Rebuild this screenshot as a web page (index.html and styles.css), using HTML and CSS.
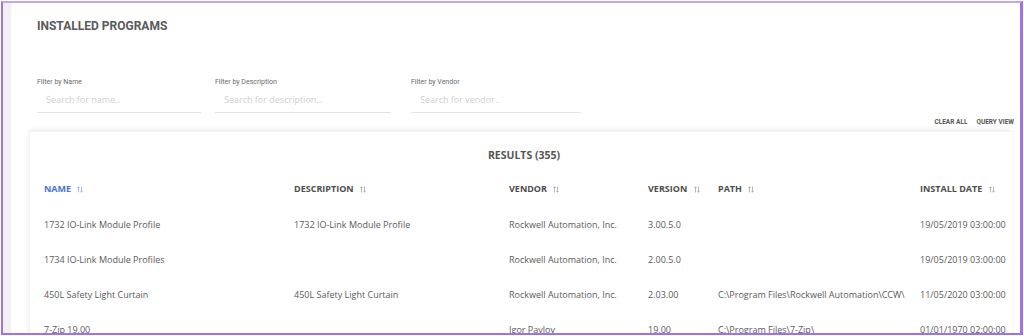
FILE: index.html
```html
<!DOCTYPE html>
<html>
<head>
<meta charset="utf-8">
<link rel="stylesheet" href="styles.css">
</head>
<body>
<div class="frame">
  <div class="strip"></div>
  <div class="page">
    <h1 class="title">INSTALLED PROGRAMS</h1>
    <div class="filters">
      <div class="filter f-name">
        <span class="label">Filter by Name</span>
        <div class="input">Search for name..</div>
      </div>
      <div class="filter f-desc">
        <span class="label">Filter by Description</span>
        <div class="input">Search for description...</div>
      </div>
      <div class="filter f-vendor">
        <span class="label">Filter by Vendor</span>
        <div class="input">Search for vendor..</div>
      </div>
    </div>
    <div class="actions">
      <span>CLEAR ALL</span>
      <span>QUERY VIEW</span>
    </div>
    <div class="card">
      <div class="results">RESULTS (355)</div>
      <table class="grid">
        <colgroup>
          <col class="c1"><col class="c2"><col class="c3"><col class="c4"><col class="c5"><col class="c6">
        </colgroup>
        <thead>
          <tr>
            <th class="active">NAME <svg class="sort" viewBox="0 0 6 7"><path d="M1.5 6.5V0.8M0.3 2L1.5 0.8 2.7 2M4.5 0.5V6.2M3.3 5L4.5 6.2 5.7 5"/></svg></th>
            <th>DESCRIPTION <svg class="sort" viewBox="0 0 6 7"><path d="M1.5 6.5V0.8M0.3 2L1.5 0.8 2.7 2M4.5 0.5V6.2M3.3 5L4.5 6.2 5.7 5"/></svg></th>
            <th>VENDOR <svg class="sort" viewBox="0 0 6 7"><path d="M1.5 6.5V0.8M0.3 2L1.5 0.8 2.7 2M4.5 0.5V6.2M3.3 5L4.5 6.2 5.7 5"/></svg></th>
            <th>VERSION <svg class="sort" viewBox="0 0 6 7"><path d="M1.5 6.5V0.8M0.3 2L1.5 0.8 2.7 2M4.5 0.5V6.2M3.3 5L4.5 6.2 5.7 5"/></svg></th>
            <th>PATH <svg class="sort" viewBox="0 0 6 7"><path d="M1.5 6.5V0.8M0.3 2L1.5 0.8 2.7 2M4.5 0.5V6.2M3.3 5L4.5 6.2 5.7 5"/></svg></th>
            <th>INSTALL DATE <svg class="sort" viewBox="0 0 6 7"><path d="M1.5 6.5V0.8M0.3 2L1.5 0.8 2.7 2M4.5 0.5V6.2M3.3 5L4.5 6.2 5.7 5"/></svg></th>
          </tr>
        </thead>
        <tbody>
          <tr><td>1732 IO-Link Module Profile</td><td>1732 IO-Link Module Profile</td><td>Rockwell Automation, Inc.</td><td>3.00.5.0</td><td></td><td>19/05/2019 03:00:00</td></tr>
          <tr><td>1734 IO-Link Module Profiles</td><td></td><td>Rockwell Automation, Inc.</td><td>2.00.5.0</td><td></td><td>19/05/2019 03:00:00</td></tr>
          <tr><td>450L Safety Light Curtain</td><td>450L Safety Light Curtain</td><td>Rockwell Automation, Inc.</td><td>2.03.00</td><td>C:\Program Files\Rockwell Automation\CCW\</td><td>11/05/2020 03:00:00</td></tr>
          <tr><td>7-Zip 19.00</td><td></td><td>Igor Pavlov</td><td>19.00</td><td>C:\Program Files\7-Zip\</td><td>01/01/1970 02:00:00</td></tr>
        </tbody>
      </table>
    </div>
  </div>
</div>
</body>
</html>
```
FILE: styles.css
```css
* { box-sizing: border-box; }
html, body { margin: 0; padding: 0; background: #fff; }
body { font-family: "Open Sans", "Liberation Sans", sans-serif; color: #555; }

.frame {
  margin: 1px 1px 0 1px;
  width: 1022px;
  height: 334px;
  border: 2px solid #9d74e2;
  border-top-color: #c2a8ee;
  border-right-width: 3px;
  display: flex;
  overflow: hidden;
  background: #fff;
}
.strip { width: 8px; flex: none; background: #f1f1f3; }
.page { flex: 1; padding: 0 7px 0 26px; display: flex; flex-direction: column; }

.title {
  margin: 16px 0 0 0;
  font-family: Roboto, "Liberation Sans", sans-serif;
  font-weight: 700;
  font-size: 12px;
  color: #5a5a5a;
  line-height: 14px;
}

.filters { display: flex; margin-top: 45px; }
.filter { display: flex; flex-direction: column; }
.f-name { width: 164px; margin-right: 14px; }
.f-desc { width: 176px; margin-right: 20px; }
.f-vendor { width: 170px; }
.label {
  font-family: Roboto, "Liberation Sans", sans-serif;
  font-size: 7px;
  color: #6a6a6a;
  line-height: 8px;
}
.input {
  margin-top: 4px;
  padding: 4px 0 0 9px;
  height: 23px;
  font-size: 9px;
  line-height: 12px;
  color: #cfcfcf;
  border-bottom: 1px solid #e4e4e4;
}

.actions {
  display: flex;
  justify-content: flex-end;
  gap: 9px;
  margin-top: 4px;
  padding-right: 2px;
  font-family: Roboto, "Liberation Sans", sans-serif;
  font-weight: 700;
  font-size: 6.5px;
  color: #555;
  line-height: 10px;
}

.card {
  margin: 4px 4px 0 -7px;
  padding: 18px 0 0 14px;
  flex: 1;
  box-shadow: 0 -2px 5px rgba(0,0,0,0.05), -2px 0 5px rgba(0,0,0,0.04);
  border-top: 1px solid #f3f3f3;
}
.results {
  text-align: center;
  font-weight: 700;
  font-size: 10.5px;
  color: #555;
  line-height: 10px;
  padding-right: 8px;
}

.grid { border-collapse: collapse; table-layout: fixed; width: 968px; margin-top: 23px; }
.c1 { width: 250px; } .c2 { width: 215px; } .c3 { width: 139px; }
.c4 { width: 70px; } .c5 { width: 202px; } .c6 { width: 92px; }
.grid th {
  text-align: left;
  vertical-align: top;
  font-weight: 700;
  font-size: 9px;
  color: #4d4d4d;
  padding: 0 0 12px 0;
  height: 24px;
  line-height: 12px;
  white-space: nowrap;
}
.grid th.active { color: #4a72d0; }
.sort { width: 6px; height: 7px; margin-left: 4px; vertical-align: -1px; fill: none; stroke: #9a9a9a; stroke-width: 0.7; }
.active .sort { stroke: #8aa2de; }
.grid td {
  padding: 0;
  height: 35px;
  font-size: 9px;
  color: #5a5a5a;
  white-space: nowrap;
  overflow: visible;
}
```
